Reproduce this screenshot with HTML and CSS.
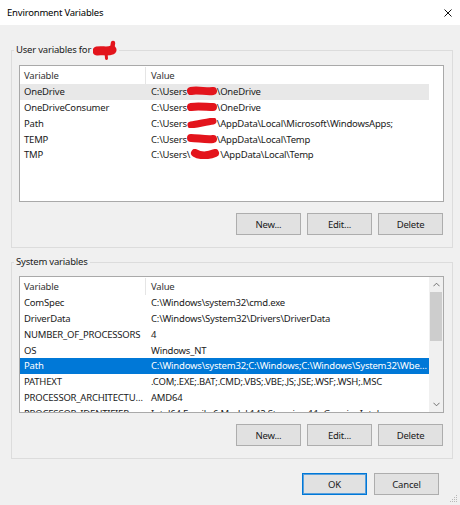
FILE: index.html
```html
<!DOCTYPE html>
<html>
<head>
<meta charset="utf-8">
<title>Environment Variables</title>
<link rel="stylesheet" href="styles.css">
</head>
<body>
<div class="window">
  <div class="titlebar">
    <span class="title">Environment Variables</span>
    <svg class="close" viewBox="0 0 8 8"><path d="M0.5 0.5 L7.5 7.5 M7.5 0.5 L0.5 7.5" stroke="#111" stroke-width="1" fill="none"/></svg>
  </div>
  <div class="client">
    <fieldset class="group">
      <legend>User variables for <svg class="scrawl" viewBox="0 0 24 20"><path d="M4 11 C9 10 14 12 19 10" stroke="#e3141c" stroke-width="9" stroke-linecap="round" fill="none"/><path d="M19 10 L20 3" stroke="#e3141c" stroke-width="4.5" stroke-linecap="round"/><path d="M13 12 L13.5 18.5" stroke="#e3141c" stroke-width="3" stroke-linecap="round"/></svg></legend>
      <div class="listbox">
        <div class="table">
          <div class="row head"><div class="c1">Variable</div><div class="c2">Value</div></div>
          <div class="row focus"><div class="c1">OneDrive</div><div class="c2">C:\Users<svg class="blob" viewBox="0 0 30 10"><path d="M4 5 C10 3.5 20 6 26 5" stroke="#e3141c" stroke-width="8" stroke-linecap="round" fill="none"/></svg>\OneDrive</div></div>
          <div class="row"><div class="c1">OneDriveConsumer</div><div class="c2">C:\Users<svg class="blob" viewBox="0 0 30 10"><path d="M4 5 C10 4 20 5 26 5" stroke="#e3141c" stroke-width="8" stroke-linecap="round" fill="none"/></svg>\OneDrive</div></div>
          <div class="row"><div class="c1">Path</div><div class="c2">C:\Users<svg class="blob" viewBox="0 0 30 10"><path d="M4 7 C10 6 20 4 26 3" stroke="#e3141c" stroke-width="7" stroke-linecap="round" fill="none"/></svg>\AppData\Local\Microsoft\WindowsApps;</div></div>
          <div class="row"><div class="c1">TEMP</div><div class="c2">C:\Users<svg class="blob" viewBox="0 0 30 10"><path d="M4 4 C10 4 20 6 26 5" stroke="#e3141c" stroke-width="8" stroke-linecap="round" fill="none"/></svg>\AppData\Local\Temp</div></div>
          <div class="row"><div class="c1">TMP</div><div class="c2">C:\Users\<svg class="blob" viewBox="0 0 30 10"><path d="M5 4 C10 7 18 7 25 4" stroke="#e3141c" stroke-width="8" stroke-linecap="round" fill="none"/></svg>\AppData\Local\Temp</div></div>
        </div>
      </div>
      <div class="buttons">
        <button class="btn">New...</button>
        <button class="btn">Edit...</button>
        <button class="btn">Delete</button>
      </div>
    </fieldset>

    <fieldset class="group sys">
      <legend>System variables</legend>
      <div class="listbox">
        <div class="table">
          <div class="row head"><div class="c1">Variable</div><div class="c2">Value</div></div>
          <div class="row"><div class="c1">ComSpec</div><div class="c2">C:\Windows\system32\cmd.exe</div></div>
          <div class="row"><div class="c1">DriverData</div><div class="c2">C:\Windows\System32\Drivers\DriverData</div></div>
          <div class="row"><div class="c1">NUMBER_OF_PROCESSORS</div><div class="c2">4</div></div>
          <div class="row"><div class="c1">OS</div><div class="c2">Windows_NT</div></div>
          <div class="row selected"><div class="c1">Path</div><div class="c2">C:\Windows\system32;C:\Windows;C:\Windows\System32\Wbem;C:\Windows\System32\WindowsPowerShell\v1.0\</div></div>
          <div class="row"><div class="c1">PATHEXT</div><div class="c2">.COM;.EXE;.BAT;.CMD;.VBS;.VBE;.JS;.JSE;.WSF;.WSH;.MSC</div></div>
          <div class="row"><div class="c1">PROCESSOR_ARCHITECTURE</div><div class="c2">AMD64</div></div>
          <div class="row"><div class="c1">PROCESSOR_IDENTIFIER</div><div class="c2">Intel64 Family 6 Model 142 Stepping 11, GenuineIntel</div></div>
        </div>
        <div class="vscroll">
          <div class="arrow"><svg viewBox="0 0 8 5"><path d="M0.5 4.5 L4 1 L7.5 4.5" stroke="#606060" stroke-width="1" fill="none"/></svg></div>
          <div class="thumb"></div>
          <div class="track"></div>
          <div class="arrow"><svg viewBox="0 0 8 5"><path d="M0.5 0.5 L4 4 L7.5 0.5" stroke="#606060" stroke-width="1" fill="none"/></svg></div>
        </div>
      </div>
      <div class="buttons">
        <button class="btn">New...</button>
        <button class="btn">Edit...</button>
        <button class="btn">Delete</button>
      </div>
    </fieldset>

    <div class="dialog-buttons">
      <button class="btn default">OK</button>
      <button class="btn">Cancel</button>
    </div>
  </div>
  <svg class="grip" viewBox="0 0 8 8"><g fill="#b8b8b8"><rect x="6" y="0" width="1" height="1"/><rect x="4" y="2" width="1" height="1"/><rect x="6" y="2" width="1" height="1"/><rect x="2" y="4" width="1" height="1"/><rect x="4" y="4" width="1" height="1"/><rect x="6" y="4" width="1" height="1"/><rect x="0" y="6" width="1" height="1"/><rect x="2" y="6" width="1" height="1"/><rect x="4" y="6" width="1" height="1"/><rect x="6" y="6" width="1" height="1"/></g></svg>
</div>
</body>
</html>
```

FILE: styles.css
```css
* { box-sizing: border-box; }
html, body { margin: 0; padding: 0; }
body {
  width: 460px;
  height: 505px;
  overflow: hidden;
  background: #f0f0f0;
  font-family: "Noto Sans", "Open Sans", sans-serif;
  font-size: 9.5px;
  letter-spacing: -0.2px;
  color: #1a1a1a;
}
.window {
  position: relative;
  height: 505px;
  display: flex;
  flex-direction: column;
}
.titlebar {
  height: 25px;
  flex: none;
  background: #ffffff;
  display: flex;
  align-items: center;
  justify-content: space-between;
  padding: 0 8px 0 7px;
}
.title { font-size: 9.5px; color: #000; }
.close { width: 8px; height: 8px; display: block; }

.client {
  padding: 18px 7px 0 11px;
}
.group {
  margin: 0;
  border: 1px solid #dcdcdc;
  padding: 0 8px 12px 7px;
  min-width: 0;
}
.group legend {
  padding: 0 2px;
  margin-left: -5px;
  line-height: 14px;
  height: 14px;
  color: #1a1a1a;
  display: flex;
  align-items: center;
}
.scrawl { width: 24px; height: 20px; margin-left: 2px; margin-top: -1px; }
.sys { margin-top: 7px; }

.listbox {
  margin-top: 8px;
  height: 137px;
  border: 1px solid #a9a9a9;
  background: #fff;
  display: flex;
  overflow: hidden;
}
.sys .listbox { margin-top: 7px; }
.table { width: 409px; flex: none; }
.row {
  display: grid;
  grid-template-columns: 126px 283px;
  height: 15.86px;
  line-height: 15.86px;
  white-space: nowrap;
}
.row > div {
  overflow: hidden;
  text-overflow: ellipsis;
  white-space: nowrap;
}
.c1 { padding-left: 4px; }
.c2 { padding-left: 5px; }
.row.head { height: 17px; line-height: 17px; margin-top: 1px; color: #333; }
.row.head .c1 { border-right: 1px solid #e5e5e5; }
.row.focus { background: #e8e8e8; }
.row.selected { background: #0078d7; color: #fff; }
.blob { width: 30px; height: 10px; vertical-align: -1px; }

.vscroll {
  width: 14px;
  flex: none;
  background: #f0f0f0;
  display: flex;
  flex-direction: column;
}
.arrow {
  height: 15px;
  display: flex;
  align-items: center;
  justify-content: center;
  flex: none;
}
.arrow svg { width: 7px; height: 5px; display: block; }
.thumb { height: 49px; margin: 0 1px; background: #cdcdcd; flex: none; }
.track { flex: 1; }

.buttons {
  margin-top: 11px;
  display: flex;
  justify-content: flex-end;
  gap: 6px;
  padding-right: 1px;
}
.btn {
  width: 65px;
  height: 22px;
  margin: 0;
  padding: 0;
  background: #e1e1e1;
  border: 1px solid #adadad;
  border-radius: 0;
  font-family: inherit;
  font-size: 9.5px;
  letter-spacing: -0.2px;
  color: #1a1a1a;
}
.dialog-buttons {
  margin-top: 14px;
  display: flex;
  justify-content: flex-end;
  gap: 7px;
  padding-right: 14px;
}
.btn.default {
  border: 1px solid #0078d7;
  box-shadow: inset 0 0 0 1px #5aa0dc;
}
.grip {
  position: absolute;
  right: 2px;
  bottom: 2px;
  width: 8px;
  height: 8px;
}
```
